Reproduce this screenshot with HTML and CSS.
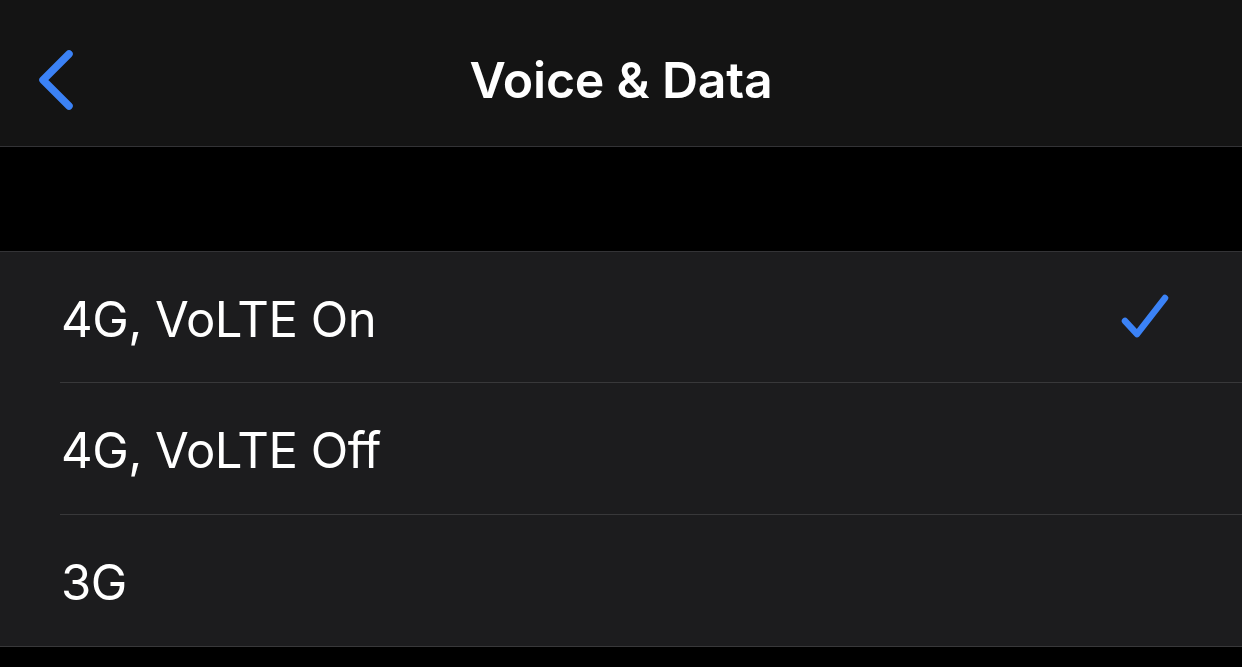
FILE: index.html
```html
<!DOCTYPE html>
<html lang="en">
<head>
	<meta charset="UTF-8">
	<title>Voice &amp; Data</title>
	<link rel="stylesheet" href="styles.css">
</head>
<body>
	<div class="navbar">
		<a class="back" href="javascript:void(0);">
			<svg width="40" height="64" viewBox="0 0 40 64">
				<path d="M33 5 L7 31 L33 57" fill="none" stroke="#3b82f6" stroke-width="7.5" stroke-linecap="round" stroke-linejoin="round"/>
			</svg>
		</a>
		<span class="title">Voice &amp; Data</span>
	</div>
	<div class="gap"></div>
	<ul class="options">
		<li class="option">
			<span class="label">4G, VoLTE On</span>
			<svg class="check" width="52" height="50" viewBox="0 0 52 50">
				<path d="M5 27 L17 40 L45 4" fill="none" stroke="#3b82f6" stroke-width="6.5" stroke-linecap="round" stroke-linejoin="round"/>
			</svg>
		</li>
		<li class="option">
			<span class="label">4G, VoLTE Off</span>
		</li>
		<li class="option">
			<span class="label">3G</span>
		</li>
	</ul>
</body>
</html>
```
FILE: styles.css
```css
body{
	margin: 0px;
	padding: 0px;
	background-color: #000;
	font-family: Inter, "Noto Sans", sans-serif;
	color: #fff;
	height: 667px;
	overflow: hidden;
}

.navbar{
	height: 146px;
	background-color: #141414;
	border-bottom: 1px solid #333336;
	display: flex;
	align-items: center;
	justify-content: center;
	position: relative;
}

.back{
	position: absolute;
	left: 36px;
	top: 49px;
	display: block;
	line-height: 0;
}

.title{
	font-size: 50px;
	font-weight: 600;
	letter-spacing: -0.2px;
	padding-top: 14px;
}

.gap{
	height: 104px;
	border-bottom: 1px solid #333336;
}

.options{
	list-style: none;
	margin: 0px;
	padding: 0px 0px 0px 60px;
	background-color: #1c1c1e;
	border-bottom: 1px solid #38383a;
}

.option{
	height: 131px;
	display: flex;
	align-items: center;
	justify-content: space-between;
	padding-right: 70px;
	border-bottom: 1px solid #38383a;
}

.option:first-child{
	height: 130px;
}

.option:last-child{
	border-bottom: none;
}

.label{
	font-size: 49px;
	font-weight: 400;
	letter-spacing: -0.5px;
	padding-left: 1px;
	padding-top: 4px;
}

.check{
	display: block;
	margin-top: 4px;
}
```
